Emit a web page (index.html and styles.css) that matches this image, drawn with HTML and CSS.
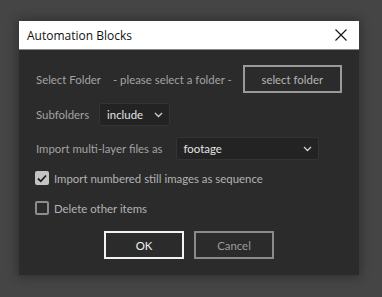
FILE: index.html
```html
<!DOCTYPE html>
<html lang="en">
<head>
  <meta charset="UTF-8" />
  <title>Automation Blocks</title>
  <link rel="stylesheet" href="styles.css">
</head>
<body>
  <div class="dialog">
    <div class="titlebar">
      <span class="title">Automation Blocks</span>
      <svg class="close" width="12" height="12" viewBox="0 0 12 12">
        <path d="M0.5 0.5 L11.5 11.5 M11.5 0.5 L0.5 11.5" stroke="#111" stroke-width="1.1" fill="none" />
      </svg>
    </div>
    <div class="content">
      <div class="row row-folder">
        <span class="label">Select Folder</span>
        <span class="hint">- please select a folder -</span>
        <button class="btn btn-folder">select folder</button>
      </div>
      <div class="row row-sub">
        <span class="label">Subfolders</span>
        <div class="select sel-sub">
          <span>include</span>
          <svg width="9" height="6" viewBox="0 0 9 6"><path d="M1 1 L4.5 4.5 L8 1" stroke="#d0d0d0" stroke-width="1.3" fill="none" /></svg>
        </div>
      </div>
      <div class="row row-layer">
        <span class="label">Import multi-layer files as</span>
        <div class="select sel-layer">
          <span>footage</span>
          <svg width="9" height="6" viewBox="0 0 9 6"><path d="M1 1 L4.5 4.5 L8 1" stroke="#d0d0d0" stroke-width="1.3" fill="none" /></svg>
        </div>
      </div>
      <div class="row check-row row-seq">
        <span class="box checked">
          <svg width="10" height="9" viewBox="0 0 10 9"><path d="M1 4.5 L3.8 7.3 L9 1.5" stroke="#1e1e1e" stroke-width="1.8" fill="none" /></svg>
        </span>
        <span class="check-label">Import numbered still images as sequence</span>
      </div>
      <div class="row check-row row-del">
        <span class="box"></span>
        <span class="check-label">Delete other items</span>
      </div>
      <div class="actions">
        <button class="btn btn-ok">OK</button>
        <button class="btn btn-cancel">Cancel</button>
      </div>
    </div>
  </div>
</body>
</html>
```

FILE: styles.css
```css
body {
  margin: 0;
  padding: 21px 0 0 19px;
  background: #454545;
  font-family: Lato, 'Liberation Sans', sans-serif;
  font-size: 11.4px;
  height: 297px;
  box-sizing: border-box;
  overflow: hidden;
}
.dialog {
  width: 340px;
  height: 254px;
  background: #2b2b2b;
  box-shadow: 0 0 10px 2px rgba(0, 0, 0, 0.3);
  display: flex;
  flex-direction: column;
}
.titlebar {
  height: 28px;
  background: #fff;
  border-bottom: 1px solid #8a8a8a;
  display: flex;
  align-items: center;
  justify-content: space-between;
  padding: 0 12px 0 8px;
}
.title {
  font-family: 'Open Sans', sans-serif;
  font-size: 12px;
  color: #111;
}
.content {
  padding: 15px 16px 0 17px;
  display: flex;
  flex-direction: column;
}
.row {
  display: flex;
  align-items: center;
  white-space: nowrap;
}
.label {
  color: #a3a3a3;
}
.hint {
  color: #a3a3a3;
  margin-left: 12px;
}
.btn {
  font-family: Lato, 'Liberation Sans', sans-serif;
  font-size: 11.4px;
  background: #2b2b2b;
  height: 28px;
  box-sizing: border-box;
  padding: 0;
  cursor: pointer;
}
.btn-folder {
  width: 99px;
  margin-left: 11px;
  border: 2px solid #9a9a9a;
  color: #b5b5b5;
}
.row-sub {
  margin-top: 10px;
}
.row-layer {
  margin-top: 11px;
}
.select {
  height: 23px;
  box-sizing: border-box;
  background: #232323;
  border: 1px solid #333;
  border-radius: 2px;
  display: flex;
  align-items: center;
  justify-content: space-between;
  padding: 0 6px 0 7px;
  color: #e4e4e4;
}
.sel-sub {
  width: 71px;
  margin-left: 10px;
}
.sel-layer {
  width: 143px;
  margin-left: 13px;
}
.check-row {
  height: 18px;
}
.row-seq {
  margin-top: 9px;
}
.row-del {
  margin-top: 12px;
}
.box {
  width: 14px;
  height: 14px;
  box-sizing: border-box;
  border: 2px solid #8c8c8c;
  border-radius: 2px;
  background: #2b2b2b;
  display: flex;
  align-items: center;
  justify-content: center;
  margin-left: -1px;
}
.box.checked {
  background: #c4c4c4;
  border-color: #c4c4c4;
}
.check-label {
  color: #b3b3b3;
  margin-left: 5px;
}
.actions {
  display: flex;
  justify-content: center;
  gap: 10px;
  margin-top: 14px;
  margin-left: -1px;
}
.btn-ok,
.btn-cancel {
  width: 80px;
}
.btn-ok {
  border: 2px solid #f2f2f2;
  color: #f2f2f2;
}
.btn-cancel {
  border: 2px solid #8a8a8a;
  color: #9c9c9c;
}
```
